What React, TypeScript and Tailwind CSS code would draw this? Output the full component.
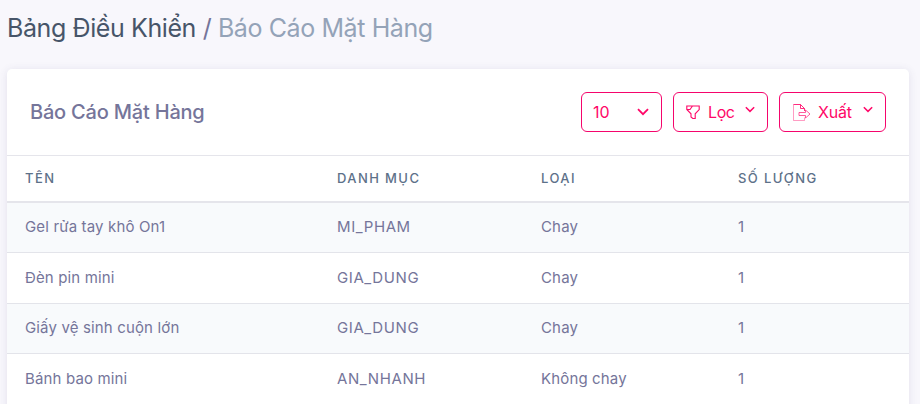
import { clsx } from "clsx";

const rows = [
  { name: "Gel rửa tay khô On1", category: "MI_PHAM", type: "Chay", quantity: 1 },
  { name: "Đèn pin mini", category: "GIA_DUNG", type: "Chay", quantity: 1 },
  { name: "Giấy vệ sinh cuộn lớn", category: "GIA_DUNG", type: "Chay", quantity: 1 },
  { name: "Bánh bao mini", category: "AN_NHANH", type: "Không chay", quantity: 1 },
];

const Chevron = ({ className }: { className?: string }) => (
  <svg viewBox="0 0 12 8" fill="none" stroke="currentColor" strokeWidth="1.8" className={className}>
    <path d="M1 1.2 6 6.2l5-5" />
  </svg>
);

const FilterIcon = () => (
  <svg width="14" height="15" viewBox="0 0 14 15" fill="none" stroke="currentColor" strokeWidth="1.1">
    <path d="M.8 1h12.4v3.5L9.2 8.8v4.7H6.8L5 12V8.8L.8 4.5zM1 4.5h3L6.5 1" />
  </svg>
);

const ExportIcon = () => (
  <svg width="18" height="17" viewBox="0 0 18 17" fill="none" stroke="currentColor" strokeWidth="1">
    <path d="M11.5 13.5v3H.5V.5" opacity="0.4" />
    <path d="M.5.5h7l4 4V7M7.5.5v4h4" opacity="0.85" />
    <path d="M6 8.5h6.5V6l4.5 4-4.5 4v-2.5H6z" opacity="0.65" />
  </svg>
);

const columns = "grid grid-cols-[312px_204px_197px_1fr] items-center pl-[18px]";

const App = () => {
  return (
    <div className="h-[404px] overflow-hidden bg-[#f8f7fc] pl-[7px] pr-[11px] font-['Inter',sans-serif] text-[#75759a]">
      <h1 className="h-[69px] whitespace-nowrap pt-[11px] text-[25px] leading-[34px] tracking-[-0.4px] text-[#475569]">
        Bảng Điều Khiển <span className="text-[#75759a]">/</span>{" "}
        <span className="text-[#94a3b8]">Báo Cáo Mặt Hàng</span>
      </h1>

      <div className="h-[360px] rounded-[5px] bg-white shadow-[0_1px_8px_rgba(70,65,120,0.12)]">
        <div className="flex h-[87px] items-center justify-between border-b border-[#e5e5eb] px-[23px]">
          <h2 className="whitespace-nowrap text-[20px] font-medium tracking-[-0.2px]">Báo Cáo Mặt Hàng</h2>
          <div className="flex gap-[11px] text-base text-[#ff0768]">
            <button className="flex h-10 w-[81px] items-center justify-between rounded-md border border-[#f5056c] pl-[11px] pr-3">
              <span>10</span>
              <Chevron className="mb-px h-2 w-3" />
            </button>
            <button className="flex h-10 w-[95px] items-center rounded-md border border-[#f5056c] pl-3">
              <FilterIcon />
              <span className="ml-2 tracking-[-0.4px]">Lọc</span>
              <Chevron className="mb-1.5 ml-auto mr-3 h-[7px] w-2.5" />
            </button>
            <button className="flex h-10 w-[107px] items-center rounded-md border border-[#f5056c] pl-[13px]">
              <ExportIcon />
              <span className="ml-[7px] tracking-[-0.2px]">Xuất</span>
              <Chevron className="mb-1.5 ml-auto mr-3 h-[7px] w-2.5" />
            </button>
          </div>
        </div>

        <div className={clsx(columns, "h-[47px] border-b-2 border-[#e5e5eb] text-[13px] font-medium tracking-[1.4px] text-[#5d7189]")}>
          <span>TÊN</span>
          <span>DANH MỤC</span>
          <span>LOẠI</span>
          <span>SỐ LƯỢNG</span>
        </div>

        {rows.map((row, index) => (
          <div
            key={row.name}
            className={clsx(
              columns,
              "border-b border-[#e3e4ea] text-[15px] tracking-[0.15px]",
              index % 2 === 0 ? "h-[50px] bg-[#f8fafc]" : "h-[51px]",
            )}
          >
            <span>{row.name}</span>
            <span className="tracking-[0.6px]">{row.category}</span>
            <span>{row.type}</span>
            <span>{row.quantity}</span>
          </div>
        ))}
      </div>
    </div>
  );
};

export default App;
